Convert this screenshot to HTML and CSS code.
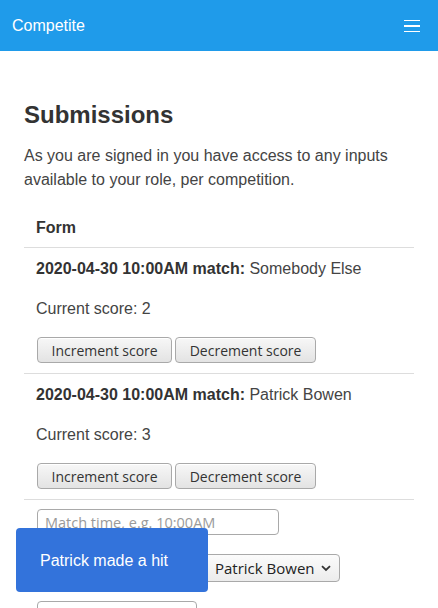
FILE: index.html
```html
<!DOCTYPE html>
<html lang="en">
<head>
<meta charset="utf-8">
<title>Competite</title>
<link rel="stylesheet" href="styles.css">
</head>
<body>
<header class="navbar">
  <span class="brand">Competite</span>
  <span class="burger" aria-label="Menu">
    <span></span><span></span><span></span>
  </span>
</header>
<main class="main">
  <h1 class="title">Submissions</h1>
  <p class="intro">As you are signed in you have access to any inputs available to your role, per competition.</p>
  <div class="table">
    <div class="th">Form</div>
    <div class="row">
      <p class="line"><strong>2020-04-30 10:00AM match:</strong> Somebody Else</p>
      <p class="line">Current score: 2</p>
      <div class="actions">
        <button class="btn">Increment score</button>
        <button class="btn">Decrement score</button>
      </div>
    </div>
    <div class="row">
      <p class="line"><strong>2020-04-30 10:00AM match:</strong> Patrick Bowen</p>
      <p class="line">Current score: 3</p>
      <div class="actions">
        <button class="btn">Increment score</button>
        <button class="btn">Decrement score</button>
      </div>
    </div>
    <div class="row form-row">
      <input class="field field-time" type="text" placeholder="Match time, e.g. 10:00AM">
      <div class="select-line">
        <span class="spacer"></span>
        <span class="select-wrap">
          <span class="select">Patrick Bowen</span>
          <svg class="chev" width="10" height="7" viewBox="0 0 10 7"><path d="M1 1.2 L5 5 L9 1.2" fill="none" stroke="#333" stroke-width="1.8"/></svg>
        </span>
      </div>
      <input class="field field-small" type="text">
    </div>
  </div>
</main>
<div class="toast">Patrick made a hit</div>
</body>
</html>
```
FILE: styles.css
```css
* { box-sizing: border-box; }
html, body { margin: 0; padding: 0; }
body {
  font-family: "Liberation Sans", Arial, sans-serif;
  font-size: 16px;
  color: #444;
  background: #fff;
  overflow: hidden;
}
.navbar {
  height: 51px;
  background: #1f9bea;
  display: flex;
  align-items: center;
  justify-content: space-between;
  padding: 0 18px 0 12px;
}
.brand {
  color: #fff;
  font-size: 16px;
  line-height: 20px;
}
.burger {
  width: 16px;
  display: flex;
  flex-direction: column;
  gap: 4px;
  margin-top: 1px;
}
.burger span {
  display: block;
  height: 1.3px;
  background: #fff;
}
.main {
  padding: 49px 24px 0;
}
.title {
  margin: 0 0 15px;
  font-size: 24px;
  line-height: 29px;
  font-weight: bold;
  color: #333;
}
.intro {
  margin: 0 0 15px;
  line-height: 24px;
  color: #444;
}
.th {
  padding: 9px 12px 7px;
  font-weight: bold;
  color: #333;
  line-height: 24px;
  border-bottom: 1px solid #ddd;
}
.row {
  padding: 9px 12px 8px;
  border-bottom: 1px solid #ddd;
}
.line {
  margin: 0 0 16px;
  line-height: 24px;
}
.line strong { color: #333; }
.actions {
  height: 28px;
  display: flex;
  align-items: flex-start;
  gap: 3px;
  margin-left: 1px;
}
.btn {
  font-family: "Open Sans", "DejaVu Sans", sans-serif;
  font-size: 14px;
  color: #333;
  height: 26px;
  padding: 0 13.5px;
  border: 1px solid #a9a9a9;
  border-radius: 4px;
  background: linear-gradient(#f7f7f7, #e3e3e3);
  box-shadow: inset 0 1px 0 #fff;
}
.form-row {
  border-bottom: none;
  padding: 9px 12px 0;
}
.field {
  display: block;
  height: 26px;
  border: 1px solid #a9a9a9;
  border-radius: 4px;
  font-family: "Open Sans", "DejaVu Sans", sans-serif;
  font-size: 14.5px;
  padding: 0 7px;
  margin-left: 1px;
  color: #333;
  background: #fff;
}
.field::placeholder { color: #9a9a9a; }
.field-time { width: 242px; }
.field-small { width: 160px; }
.select-line {
  display: flex;
  align-items: center;
  margin: 19px 0 19px 1px;
  height: 28px;
}
.spacer {
  width: 167px;
}
.select-wrap {
  position: relative;
  display: flex;
  align-items: center;
  width: 136px;
  height: 28px;
  border: 1px solid #a9a9a9;
  border-radius: 4px;
  background: linear-gradient(#fbfbfb, #ececec);
  padding-left: 10px;
  font-family: "Open Sans", "DejaVu Sans", sans-serif;
  font-size: 15px;
  color: #222;
}
.chev {
  position: absolute;
  right: 8px;
  top: 10px;
}
.toast {
  position: fixed;
  left: 16px;
  top: 528px;
  width: 192px;
  height: 64px;
  background: #3373db;
  border-radius: 4px;
  color: #fff;
  font-size: 16px;
  display: flex;
  align-items: center;
  padding: 2px 24px 0;
}
```
